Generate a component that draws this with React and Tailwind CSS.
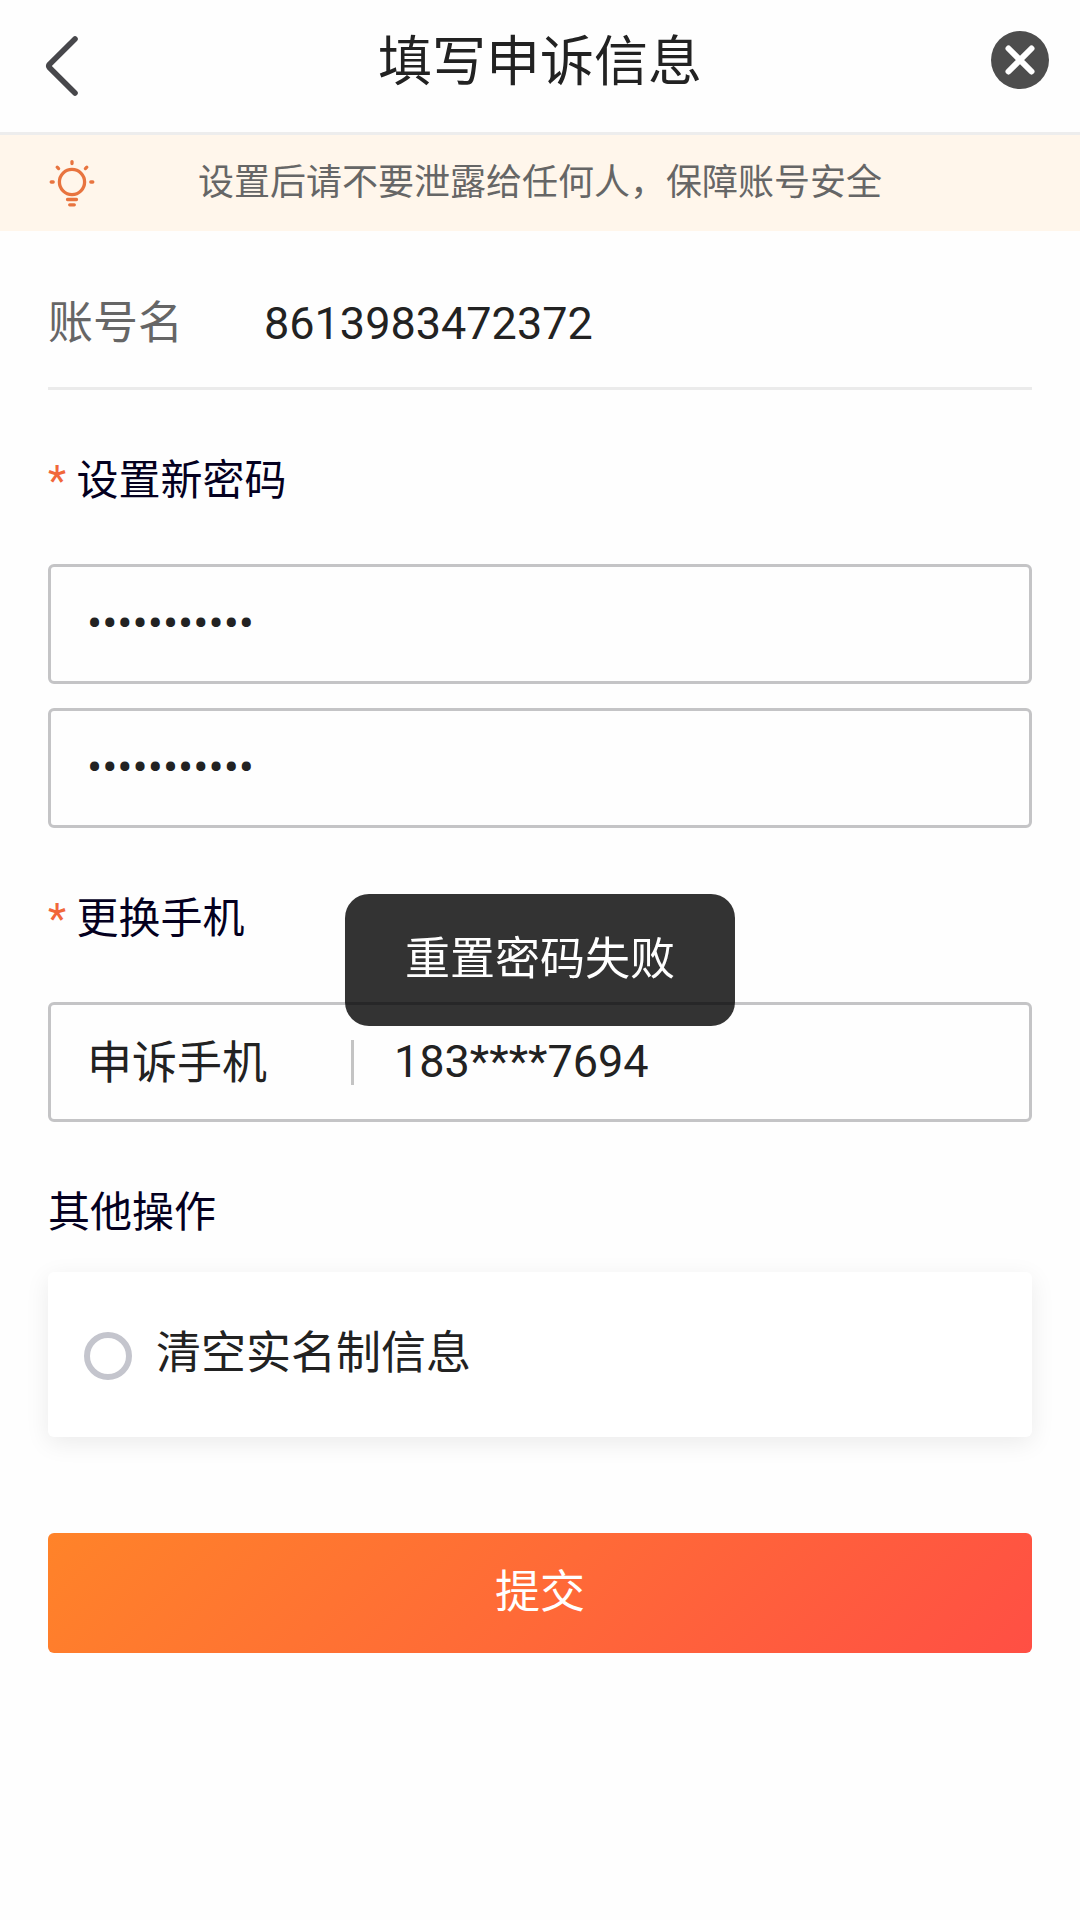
import { useState } from "react";

function BackIcon() {
  return (
    <svg viewBox="0 0 36 64" className="h-16 w-9" fill="none" stroke="#47474b" strokeWidth="5.6" strokeLinecap="round" strokeLinejoin="round" aria-hidden="true">
      <path d="M32 4 L6.6 29.2 Q5 31 6.6 32.8 L32 58" />
    </svg>
  );
}

function CloseIcon() {
  return (
    <svg viewBox="0 0 58 58" className="size-[58px]" aria-hidden="true">
      <circle cx="29" cy="29" r="29" fill="#4d4d4d" />
      <path d="M17.5 17.5 L40.5 40.5 M40.5 17.5 L17.5 40.5" stroke="#fff" strokeWidth="6" strokeLinecap="round" />
    </svg>
  );
}

function BulbIcon() {
  return (
    <svg viewBox="0 0 48 48" className="size-12" fill="none" stroke="#e8743f" strokeWidth="3.3" strokeLinecap="round" aria-hidden="true">
      <circle cx="24" cy="23" r="12.6" />
      <path d="M24 2.6v2 M9.2 8.2l1.4 1.4 M38.8 8.2l-1.4 1.4 M3.2 23h2 M42.8 23h2" />
      <path d="M19.5 40.5h9 M21.7 45.8h4.6" />
    </svg>
  );
}

function SectionTitle({ children, required }) {
  return (
    <h2 className="text-[42px] leading-[60px] text-[#04001f]">
      {required && <span className="text-[#f1673a]">* </span>}
      {children}
    </h2>
  );
}

function PasswordField({ label, value, onChange }) {
  return (
    <input
      type="password"
      aria-label={label}
      value={value}
      onChange={(e) => onChange(e.target.value)}
      className="block h-[120px] w-full rounded-md border-3 border-[#c4c4c6] bg-transparent px-9 pb-0.5 text-[45px] outline-none"
    />
  );
}

function App() {
  const [password, setPassword] = useState("abc12345678");
  const [confirm, setConfirm] = useState("abc12345678");
  const [phone, setPhone] = useState("183****7694");
  const [clearInfo, setClearInfo] = useState(false);

  return (
    <div className="min-h-screen bg-[#fefefe] font-['Roboto','Noto_Sans_CJK_SC',sans-serif] text-[#222222]" lang="zh-CN">
      <header className="flex h-[135px] items-start justify-between border-b-3 border-[#ededed] px-[31px] pt-[31px]">
        <button type="button" aria-label="返回" className="w-[58px] pt-1 pl-3">
          <BackIcon />
        </button>
        <h1 className="pt-0.5 text-[54px] leading-[60px]">填写申诉信息</h1>
        <button type="button" aria-label="关闭">
          <CloseIcon />
        </button>
      </header>

      <div className="flex h-24 items-center bg-[#fff6eb] px-12">
        <BulbIcon />
        <p className="flex-1 pr-12 text-center text-[36px] leading-[48px] text-[#666666]">设置后请不要泄露给任何人，保障账号安全</p>
      </div>

      <form className="px-12" onSubmit={(e) => e.preventDefault()}>
        <div className="flex h-[159px] items-center border-b-3 border-[#ebebeb] pt-[30px] text-[45px] leading-[60px]">
          <span className="w-[216px] text-[#666666]">账号名</span>
          <span>8613983472372</span>
        </div>

        <div className="pt-[61px]">
          <SectionTitle required>设置新密码</SectionTitle>
          <div className="flex flex-col gap-6 pt-[53px]">
            <PasswordField label="新密码" value={password} onChange={setPassword} />
            <PasswordField label="确认新密码" value={confirm} onChange={setConfirm} />
          </div>
        </div>

        <div className="pt-[61px]">
          <SectionTitle required>更换手机</SectionTitle>
          <div className="mt-[53px] flex h-[120px] items-center rounded-md border-3 border-[#c4c4c6] px-9 text-[45px] leading-[60px]">
            <label htmlFor="phone" className="w-[264px] pt-1">申诉手机</label>
            <span className="h-[45px] w-[3px] bg-[#c4c4c4]" />
            <input
              id="phone"
              type="text"
              value={phone}
              onChange={(e) => setPhone(e.target.value)}
              className="min-w-0 flex-1 bg-transparent pl-10 outline-none"
            />
          </div>
        </div>

        <div className="pt-[61px]">
          <SectionTitle>其他操作</SectionTitle>
          <label className="mt-[29px] flex h-[165px] items-center gap-6 rounded-md bg-white px-9 pt-0.5 text-[45px] leading-[60px] shadow-[0_6px_24px_rgba(0,0,0,0.08)]">
            <input
              type="radio"
              checked={clearInfo}
              onChange={() => setClearInfo(true)}
              className="size-12 appearance-none rounded-full border-6 border-[#c4c5cd] checked:border-[#ff6a35]"
            />
            <span className="pb-1">清空实名制信息</span>
          </label>
        </div>

        <button
          type="submit"
          className="mt-24 block h-[120px] w-full rounded-md bg-[linear-gradient(135deg,#ff8329_0%,#ff6a37_50%,#ff4f44_100%)] text-[45px] text-white"
        >
          提交
        </button>
      </form>

      <div role="alert" className="fixed top-1/2 left-1/2 -translate-x-1/2 -translate-y-1/2 rounded-3xl bg-black/80 px-[60px] py-9 text-[45px] leading-[60px] whitespace-nowrap text-white">
        重置密码失败
      </div>
    </div>
  );
}

export default App;
